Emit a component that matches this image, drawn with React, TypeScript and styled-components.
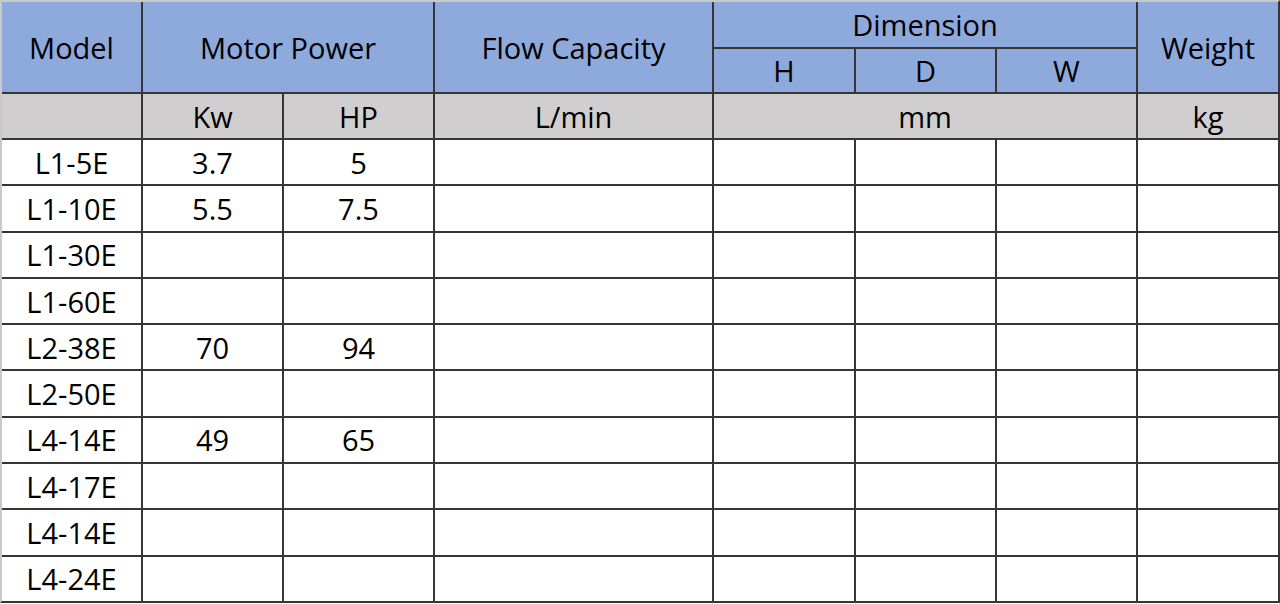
import styled, { createGlobalStyle } from "styled-components";

const GlobalStyle = createGlobalStyle`
  html, body {
    margin: 0;
    padding: 0;
    background: #ffffff;
  }

  body {
    font-family: "Open Sans", "Noto Sans", "Noto Sans CJK KR", sans-serif;
  }
`;

type Tone = "head" | "unit" | "body";

const rows: [string, string, string][] = [
  ["L1-5E", "3.7", "5"],
  ["L1-10E", "5.5", "7.5"],
  ["L1-30E", "", ""],
  ["L1-60E", "", ""],
  ["L2-38E", "70", "94"],
  ["L2-50E", "", ""],
  ["L4-14E", "49", "65"],
  ["L4-17E", "", ""],
  ["L4-14E", "", ""],
  ["L4-24E", "", ""],
];

export default function App() {
  return (
    <>
      <GlobalStyle />
      <Sheet>
        {/* header */}
        <Cell $tone="head" $rows={2}>Model</Cell>
        <Cell $tone="head" $rows={2} $cols={2}>Motor Power</Cell>
        <Cell $tone="head" $rows={2}>Flow Capacity</Cell>
        <Cell $tone="head" $cols={3}>Dimension</Cell>
        <Cell $tone="head" $rows={2}>Weight</Cell>
        <Cell $tone="head">H</Cell>
        <Cell $tone="head">D</Cell>
        <Cell $tone="head">W</Cell>

        {/* units */}
        <Cell $tone="unit" />
        <Cell $tone="unit">Kw</Cell>
        <Cell $tone="unit">HP</Cell>
        <Cell $tone="unit">L/min</Cell>
        <Cell $tone="unit" $cols={3}>mm</Cell>
        <Cell $tone="unit">kg</Cell>

        {rows.map(([model, kw, hp], i) => (
          <Row key={i} model={model} kw={kw} hp={hp} />
        ))}
      </Sheet>
    </>
  );
}

function Row({ model, kw, hp }: { model: string; kw: string; hp: string }) {
  return (
    <>
      <Cell $tone="body">{model}</Cell>
      <Cell $tone="body">{kw}</Cell>
      <Cell $tone="body">{hp}</Cell>
      <Cell $tone="body" />
      <Cell $tone="body" />
      <Cell $tone="body" />
      <Cell $tone="body" />
      <Cell $tone="body" />
    </>
  );
}

const toneColors: Record<Tone, string> = {
  head: "#8ea9db",
  unit: "#d0cece",
  body: "#ffffff",
};

const Sheet = styled.div`
  display: grid;
  grid-template-columns: 139px 139px 149px 277px 140px 139px 139px 140px;
  grid-template-rows: 45px 43px 44px repeat(10, 44.3px);
  gap: 2px;
  width: 1280px;
  box-sizing: border-box;
  background: #363636;
  border-left: 2px solid #c9c9c9;
  border-top: 2px solid #c9c9c9;
  border-right: 2px solid #363636;
  border-bottom: 2px solid #363636;
`;

const Cell = styled.div<{ $tone: Tone; $cols?: number; $rows?: number }>`
  display: flex;
  align-items: center;
  justify-content: center;
  grid-column: span ${({ $cols }) => $cols ?? 1};
  grid-row: span ${({ $rows }) => $rows ?? 1};
  background: ${({ $tone }) => toneColors[$tone]};
  color: #000000;
  font-size: 29px;
  line-height: 1;
  white-space: nowrap;
`;
